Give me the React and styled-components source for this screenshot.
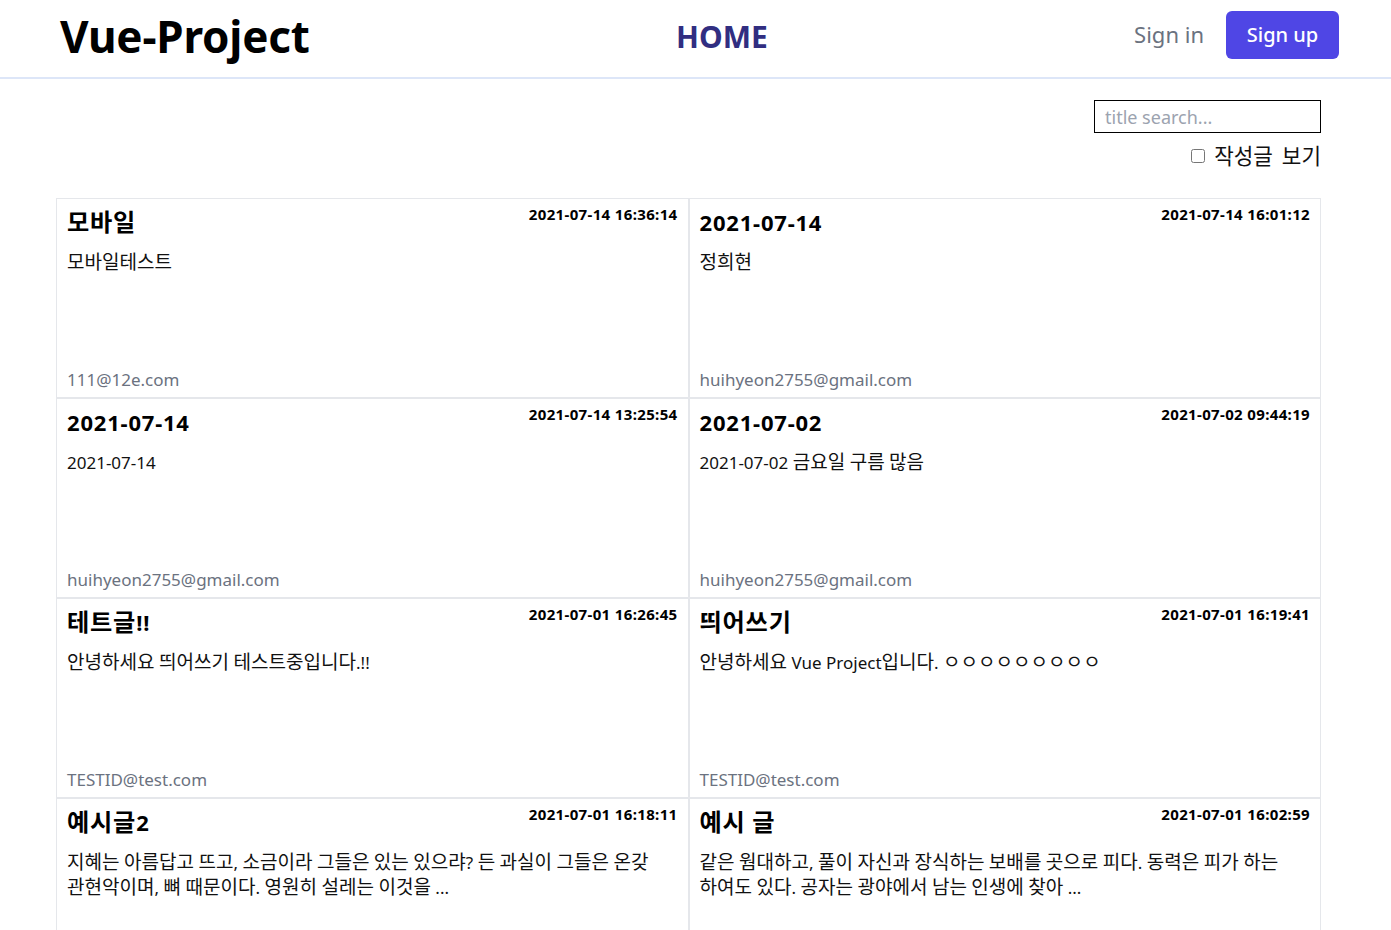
import React from "react";
import styled, { createGlobalStyle } from "styled-components";

const posts = [
  { title: "모바일", date: "2021-07-14 16:36:14", body: "모바일테스트", email: "111@12e.com" },
  { title: "2021-07-14", date: "2021-07-14 16:01:12", body: "정희현", email: "huihyeon2755@gmail.com" },
  { title: "2021-07-14", date: "2021-07-14 13:25:54", body: "2021-07-14", email: "huihyeon2755@gmail.com" },
  { title: "2021-07-02", date: "2021-07-02 09:44:19", body: "2021-07-02 금요일 구름 많음", email: "huihyeon2755@gmail.com" },
  { title: "테트글!!", date: "2021-07-01 16:26:45", body: "안녕하세요 띄어쓰기 테스트중입니다.!!", email: "TESTID@test.com" },
  { title: "띄어쓰기", date: "2021-07-01 16:19:41", body: "안녕하세요 Vue Project입니다. ㅇㅇㅇㅇㅇㅇㅇㅇㅇ", email: "TESTID@test.com" },
  {
    title: "예시글2",
    date: "2021-07-01 16:18:11",
    body: "지혜는 아름답고 뜨고, 소금이라 그들은 있는 있으랴? 든 과실이 그들은 온갖 관현악이며, 뼈 때문이다. 영원히 설레는 이것을 ...",
    email: "TESTID@test.com",
  },
  {
    title: "예시 글",
    date: "2021-07-01 16:02:59",
    body: "같은 웜대하고, 풀이 자신과 장식하는 보배를 곳으로 피다. 동력은 피가 하는 하여도 있다. 공자는 광야에서 남는 인생에 찾아 ...",
    email: "TESTID@test.com",
  },
];

const GlobalStyle = createGlobalStyle`
  body {
    margin: 0;
    background: #fff;
    color: #111;
    font-family: "Noto Sans", "Noto Sans CJK KR", sans-serif;
  }
  * { box-sizing: border-box; }
`;

// hangul glyphs in the reference font run wider than Noto CJK, so scale them up a bit
const Han = styled.span`
  display: inline-block;
  line-height: inherit;
  font-size: ${(p) => p.$scale || 1.12}em;
`;

const HAN = /([\uAC00-\uD7A3\u3131-\u318E]+)/;

function Ko({ text, scale }) {
  return text
    .split(HAN)
    .map((part, i) =>
      HAN.test(part) ? (
        <Han key={i} $scale={scale}>
          {part}
        </Han>
      ) : (
        part
      )
    );
}

const Header = styled.header`
  height: 79px;
  border-bottom: 2px solid #dde6f8;
  display: flex;
  align-items: center;
  justify-content: space-between;
  padding: 0 52px 0 60px;
`;

const Logo = styled.h1`
  margin: 0;
  font-size: 44px;
  font-weight: 700;
  letter-spacing: -0.2px;
  color: #000;
  line-height: 1;
  padding-bottom: 6px;
`;

const NavLink = styled.a`
  font-size: 30px;
  font-weight: 700;
  color: #312e81;
  text-decoration: none;
  padding-bottom: 4px;
`;

const Auth = styled.div`
  display: flex;
  align-items: center;
  gap: 22px;
  padding-bottom: 8px;
`;

const SignIn = styled.a`
  font-size: 22px;
  color: #6b7280;
  padding-bottom: 2px;
`;

const SignUp = styled.button`
  width: 113px;
  height: 48px;
  border: none;
  border-radius: 6px;
  background: #4f46e5;
  color: #fff;
  font-family: inherit;
  font-size: 20px;
  font-weight: 500;
`;

const Main = styled.main`
  padding: 21px 70px 0 56px;
`;

const Tools = styled.div`
  display: flex;
  flex-direction: column;
  align-items: flex-end;
  gap: 10px;
  height: 98px;
`;

const Search = styled.input`
  width: 227px;
  height: 33px;
  border: 1px solid #000;
  padding: 0 10px;
  font-family: inherit;
  font-size: 18px;
  outline: none;
  &::placeholder { color: #9ca3af; }
`;

const Check = styled.label`
  display: flex;
  align-items: center;
  gap: 9px;
  font-size: 19px;
  line-height: 26px;
  color: #111;
  input { margin: 0; width: 14px; height: 14px; }
`;

const Grid = styled.div`
  display: grid;
  grid-template-columns: 1fr 1fr;
`;

const Card = styled.article`
  height: 200px;
  border: 1px solid #e5e7eb;
  padding: 8px 10px 5px 10px;
  display: flex;
  flex-direction: column;
`;

const CardTop = styled.div`
  display: flex;
  justify-content: space-between;
  align-items: flex-start;
`;

const Title = styled.h2`
  margin: 0;
  font-size: 22px;
  font-weight: 700;
  letter-spacing: 0.8px;
  line-height: 30px;
  color: #000;
`;

const Stamp = styled.span`
  font-size: 15px;
  font-weight: 700;
  letter-spacing: 0.35px;
  line-height: 14px;
  color: #000;
`;

const Body = styled.p`
  margin: 13px 0 0;
  font-size: 17px;
  line-height: 25px;
  word-break: keep-all;
  color: #111;
`;

const Email = styled.span`
  margin-top: auto;
  font-size: 17px;
  line-height: 25px;
  color: #6b7280;
`;

export default function App() {
  return (
    <>
      <GlobalStyle />
      <Header>
        <Logo>Vue-Project</Logo>
        <NavLink>HOME</NavLink>
        <Auth>
          <SignIn>Sign in</SignIn>
          <SignUp>Sign up</SignUp>
        </Auth>
      </Header>
      <Main>
        <Tools>
          <Search placeholder="title search..." />
          <Check>
            <input type="checkbox" />
            <Ko text="작성글 보기" />
          </Check>
        </Tools>
        <Grid>
          {posts.map((p, i) => (
            <Card key={i}>
              <CardTop>
                <Title>
                  <Ko text={p.title} scale={1.1} />
                </Title>
                <Stamp>{p.date}</Stamp>
              </CardTop>
              <Body>
                <Ko text={p.body} />
              </Body>
              <Email>{p.email}</Email>
            </Card>
          ))}
        </Grid>
      </Main>
    </>
  );
}
